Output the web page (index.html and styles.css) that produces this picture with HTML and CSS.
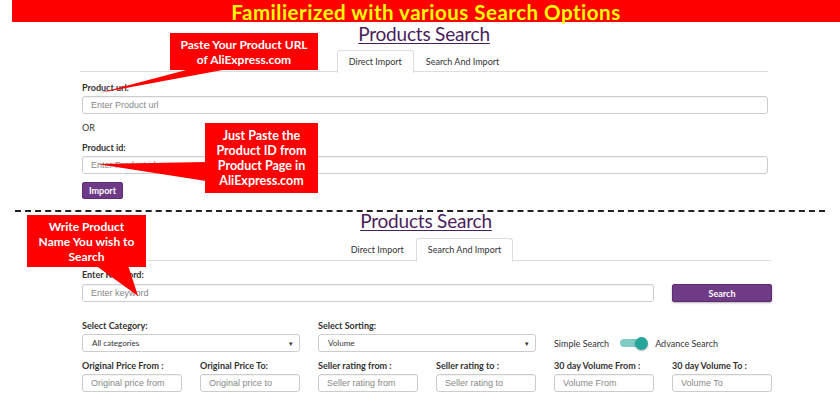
FILE: index.html
```html
<!DOCTYPE html>
<html lang="en">
<head>
    <meta charset="UTF-8">
    <meta name="viewport" content="width=device-width, initial-scale=1.0">
    <title>Products Search</title>
    <link rel="stylesheet" href="styles.css">
</head>
<body>
    <div class="banner">Familierized with various Search Options</div>

    <div class="panel panel-import">
        <h2 class="title">Products Search</h2>
        <div class="tabs">
            <span class="tab active">Direct Import</span>
            <span class="tab">Search And Import</span>
        </div>
        <div class="form">
            <label class="label">Product url:</label>
            <input class="field" type="text" placeholder="Enter Product url">
            <p class="or">OR</p>
            <label class="label">Product id:</label>
            <input class="field" type="text" placeholder="Enter Product id">
            <button class="btn btn-import">Import</button>
        </div>
    </div>

    <div class="divider"></div>

    <div class="panel panel-search">
        <h2 class="title">Products Search</h2>
        <div class="tabs">
            <span class="tab">Direct Import</span>
            <span class="tab active">Search And Import</span>
        </div>
        <div class="form">
            <label class="label">Enter Keyword:</label>
            <div class="keyword-row">
                <input class="field" type="text" placeholder="Enter keyword">
                <button class="btn btn-search">Search</button>
            </div>

            <div class="select-row">
                <div class="group">
                    <label class="label">Select Category:</label>
                    <div class="select"><span>All categories</span><span class="caret">&#9662;</span></div>
                </div>
                <div class="group">
                    <label class="label">Select Sorting:</label>
                    <div class="select"><span>Volume</span><span class="caret">&#9662;</span></div>
                </div>
                <div class="switch-wrap">
                    <span class="switch-text">Simple Search</span>
                    <span class="switch"><span class="knob"></span></span>
                    <span class="switch-text">Advance Search</span>
                </div>
            </div>

            <div class="range-row">
                <div class="group">
                    <label class="label">Original Price From :</label>
                    <input class="field" type="text" placeholder="Original price from">
                </div>
                <div class="group">
                    <label class="label">Original Price To:</label>
                    <input class="field" type="text" placeholder="Original price to">
                </div>
                <div class="group">
                    <label class="label">Seller rating from :</label>
                    <input class="field" type="text" placeholder="Seller rating from">
                </div>
                <div class="group">
                    <label class="label">Seller rating to :</label>
                    <input class="field" type="text" placeholder="Seller rating to">
                </div>
                <div class="group">
                    <label class="label">30 day Volume From :</label>
                    <input class="field" type="text" placeholder="Volume From">
                </div>
                <div class="group">
                    <label class="label">30 day Volume To :</label>
                    <input class="field" type="text" placeholder="Volume To">
                </div>
            </div>
        </div>
    </div>

    <!-- callout pointers drawn over the form -->
    <svg class="pointers" width="840" height="400" viewBox="0 0 840 400">
        <polygon points="190,69 228,69 99,93" fill="#ff0000"/>
        <polygon points="206,162 206,181 97,164" fill="#ff0000"/>
        <polygon points="95,265 128,265 138,296" fill="#ff0000"/>
    </svg>
    <div class="callout callout-url">Paste Your Product URL<br>of AliExpress.com</div>
    <div class="callout callout-id">Just Paste the<br>Product ID from<br>Product Page in<br>AliExpress.com</div>
    <div class="callout callout-name">Write Product<br>Name You wish to<br>Search</div>
</body>
</html>
```

FILE: styles.css
```css
body {
    font-family: Lato, "Open Sans", sans-serif;
    background-color: #fff;
    color: #333;
    margin: 0;
    padding: 0;
    width: 840px;
    height: 400px;
    position: relative;
    overflow: hidden;
}
.banner {
    margin-left: 12px;
    height: 22px;
    line-height: 25px;
    background-color: #ff0000;
    color: #ffff00;
    font-weight: bold;
    font-size: 20.5px;
    text-align: center;
    letter-spacing: 0.5px;
    white-space: nowrap;
}
.panel {
    padding: 0 72px 0 80px;
}
.panel-search {
    padding-right: 68px;
}
.title {
    margin: 0;
    text-align: center;
    font-size: 19px;
    font-weight: normal;
    line-height: 22px;
    color: #4a1d5c;
    text-decoration: underline;
    text-underline-offset: 2px;
    text-decoration-thickness: 1px;
    letter-spacing: -0.2px;
}
.panel-import .title {
    margin-top: 1px;
}
.panel-search .title {
    line-height: 20px;
    margin-top: -1px;
}
.tabs {
    display: flex;
    justify-content: center;
    border-bottom: 1px solid #ddd;
    margin-top: 5px;
    height: 21px;
}
.panel-search .tabs {
    margin-top: 7px;
    height: 22px;
}
.tab {
    font-size: 9px;
    color: #333;
    padding: 0 11px;
    line-height: 22px;
    border: 1px solid transparent;
    border-bottom: none;
    border-radius: 3px 3px 0 0;
}
.tab.active {
    border-color: #ddd;
    background-color: #fff;
    height: 22px;
    margin-bottom: -1px;
}
.panel-search .tab.active {
    height: 23px;
}
.form {
    padding: 0 0 0 2px;
}
.label {
    display: block;
    font-size: 9px;
    font-weight: bold;
    color: #333;
    line-height: 12px;
}
.panel-import .label {
    margin-top: 8px;
    margin-bottom: 2px;
}
.panel-import .form > .label:first-child {
    margin-top: 10px;
}
.field {
    display: block;
    box-sizing: border-box;
    width: 100%;
    height: 18px;
    border: 1px solid #ccc;
    border-radius: 3px;
    padding: 0 8px;
    font-family: "Liberation Sans", Arial, sans-serif;
    font-size: 9px;
    color: #555;
    box-shadow: inset 0 1px 1px rgba(0, 0, 0, 0.05);
}
.field::placeholder {
    color: #888;
}
.or {
    margin: 8px 0 0;
    font-size: 9px;
    line-height: 12px;
    color: #333;
}
.btn {
    font-family: Lato, sans-serif;
    font-size: 9px;
    font-weight: bold;
    color: #fff;
    background-color: #6f3a86;
    border: 1px solid #5c2d70;
    border-radius: 2px;
    height: 18px;
    padding: 0;
}
.btn-import {
    display: block;
    width: 41px;
    height: 17px;
    margin-top: 8px;
}
.divider {
    margin: 11px 15px 0;
    border-top: 2px dashed #222;
}
.panel-search .label {
    margin-bottom: 2px;
}
.panel-search .form > .label {
    margin-top: 8px;
    margin-bottom: 3px;
}
.keyword-row {
    display: flex;
    gap: 18px;
}
.keyword-row .field {
    width: 572px;
    flex: none;
}
.btn-search {
    flex: 1;
    box-shadow: 0 1px 2px rgba(0, 0, 0, 0.3);
}
.select-row {
    display: flex;
    align-items: flex-end;
    gap: 18px;
    margin-top: 18px;
}
.select-row .group {
    width: 218px;
}
.select {
    box-sizing: border-box;
    height: 18px;
    border: 1px solid #ccc;
    border-radius: 3px;
    display: flex;
    justify-content: space-between;
    align-items: center;
    padding: 0 6px 0 9px;
    font-size: 8px;
    color: #333;
}
.caret {
    font-size: 7px;
}
.switch-wrap {
    display: flex;
    align-items: center;
    gap: 8px;
    height: 18px;
    font-size: 9px;
    color: #333;
}
.switch {
    position: relative;
    display: inline-block;
    width: 27px;
    height: 8px;
    border-radius: 4px;
    background-color: #80cbc4;
    margin-left: 3px;
}
.knob {
    position: absolute;
    right: -1px;
    top: -2.5px;
    width: 13px;
    height: 13px;
    border-radius: 50%;
    background-color: #26a69a;
    box-shadow: 0 1px 2px rgba(0, 0, 0, 0.3);
}
.range-row {
    display: flex;
    gap: 18px;
    margin-top: 8px;
}
.range-row .group {
    width: 100px;
}
.pointers {
    position: absolute;
    left: 0;
    top: 0;
    pointer-events: none;
}
.callout {
    position: absolute;
    background-color: #ff0000;
    color: #fff;
    font-family: Lato, sans-serif;
    font-weight: bold;
    font-size: 12px;
    line-height: 15px;
    text-align: center;
    display: flex;
    align-items: center;
    justify-content: center;
}
.callout-url {
    left: 170px;
    top: 33px;
    width: 148px;
    height: 37px;
}
.callout-id {
    left: 205px;
    top: 123px;
    width: 113px;
    height: 70px;
    font-size: 12.5px;
}
.callout-name {
    left: 27px;
    top: 215px;
    width: 119px;
    height: 52px;
}
```
